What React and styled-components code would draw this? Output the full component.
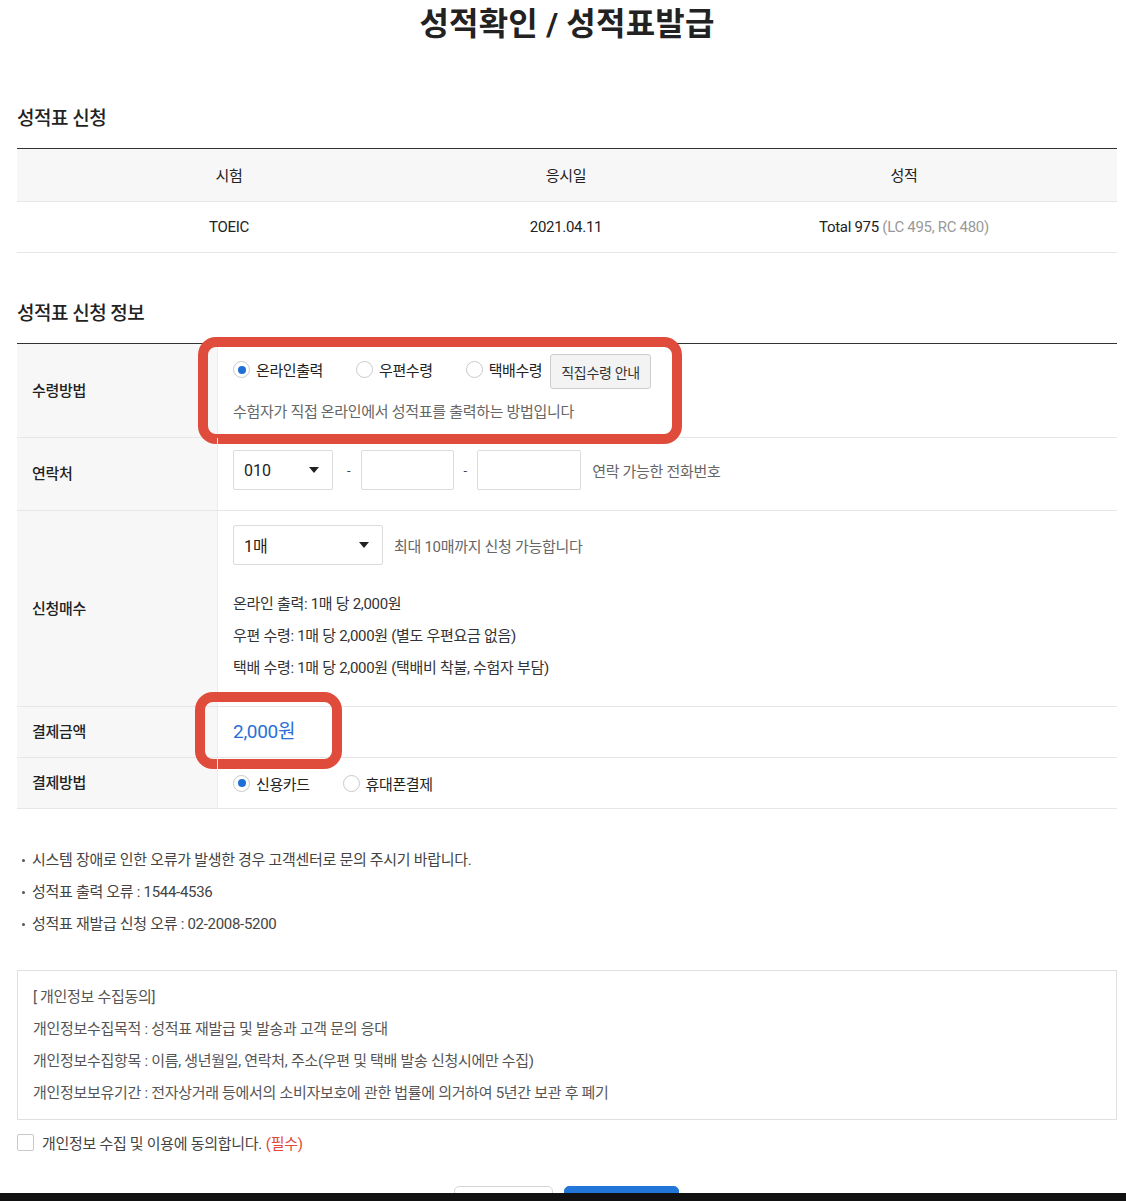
import React from 'react';
import styled, { createGlobalStyle } from 'styled-components';

const GlobalStyle = createGlobalStyle`
  html, body {
    margin: 0;
    padding: 0;
    background: #fff;
  }
  body {
    font-family: Roboto, "Noto Sans CJK KR", sans-serif;
    color: #222;
  }
  * {
    box-sizing: border-box;
  }
`;

const Page = styled.div`
  padding: 0 9px 60px 17px;
  width: 1126px;
`;

const Title = styled.h1`
  margin: 0;
  padding-top: 2px;
  text-align: center;
  font-size: 32px;
  line-height: 44px;
  font-weight: 700;
  letter-spacing: 0.2px;
  color: #222;
`;

const SectionTitle = styled.h2`
  margin: ${props => (props.first ? '59px' : '47px')} 0 15px 0;
  font-size: 19px;
  line-height: 28px;
  font-weight: 500;
  letter-spacing: -0.5px;
`;

const ScoreTable = styled.div`
  border-top: 1px solid #333;
`;

const ScoreRow = styled.div`
  display: grid;
  grid-template-columns: 424px 250px 1fr;
  height: ${props => (props.head ? '53px' : '51px')};
  align-items: center;
  background: ${props => (props.head ? '#f7f7f7' : '#fff')};
  border-bottom: 1px solid #e6e6e6;
  font-size: 15px;
  padding-bottom: ${props => (props.head ? '2px' : '0')};
  text-align: center;
  letter-spacing: -0.3px;
`;

const Muted = styled.span`
  color: #999;
`;

const FormTable = styled.div`
  border-top: 1px solid #333;
`;

const FormRow = styled.div`
  display: flex;
  border-bottom: 1px solid #e6e6e6;
  min-height: ${props => props.h}px;
`;

const Label = styled.div`
  width: 200px;
  flex-shrink: 0;
  background: #f7f7f7;
  display: flex;
  align-items: center;
  padding: 0 0 3px 15px;
  font-size: 15px;
  font-weight: 500;
  letter-spacing: -0.3px;
  color: #222;
`;

const Value = styled.div`
  position: relative;
  flex: 1;
  border-left: 1px solid #ececec;
  padding: ${props => props.pad || '0 15px'};
  display: flex;
  flex-direction: column;
  justify-content: ${props => (props.center ? 'center' : 'flex-start')};
`;

const Line = styled.div`
  display: flex;
  align-items: center;
  min-height: ${props => props.h || 20}px;
  margin-top: ${props => props.mt || 0}px;
`;

const RadioItem = styled.label`
  display: flex;
  align-items: center;
  margin-right: 33px;
  margin-bottom: ${props => (props.lift ? '4px' : '0')};
  font-size: 15px;
  letter-spacing: -0.4px;
  color: #222;
`;

const RadioCircle = styled.span`
  width: 17px;
  height: 17px;
  border-radius: 50%;
  border: 1px solid #c9c9c9;
  background: #fff;
  margin-right: 6px;
  display: flex;
  align-items: center;
  justify-content: center;

  &::after {
    content: '';
    width: 8px;
    height: 8px;
    border-radius: 50%;
    background: ${props => (props.checked ? '#1f6fd6' : 'transparent')};
  }
`;

const GuideButton = styled.button`
  margin-left: -25px;
  height: 35px;
  padding: 0 10px;
  border: 1px solid #cdcdcd;
  border-radius: 3px;
  background: #f3f3f3;
  font-family: inherit;
  font-size: 14px;
  letter-spacing: -0.3px;
  color: #333;
`;

const Help = styled.span`
  font-size: 15px;
  color: #666;
  letter-spacing: -0.3px;
`;

const SelectBox = styled.div`
  width: ${props => props.w}px;
  height: 40px;
  margin-right: ${props => props.mr || 0}px;
  border: 1px solid #dcdcdc;
  border-radius: 2px;
  display: flex;
  align-items: center;
  justify-content: space-between;
  padding: 0 13px 0 10px;
  font-size: 16px;
  color: #222;

  &::after {
    content: '';
    border-left: 5px solid transparent;
    border-right: 5px solid transparent;
    border-top: 6px solid #222;
  }
`;

const Dash = styled.span`
  margin: 0 10px;
  font-size: 13px;
  color: #444;
`;

const TextBox = styled.div`
  width: ${props => props.w}px;
  height: 40px;
  border: 1px solid #dcdcdc;
  border-radius: 2px;
`;

const SideNote = styled(Help)`
  margin-left: ${props => props.ml || 11}px;
`;

const PriceList = styled.div`
  margin-top: 23px;
`;

const PriceLine = styled.div`
  font-size: 15px;
  line-height: 32px;
  color: #333;
  letter-spacing: -0.3px;
`;

const Amount = styled.span`
  font-size: 19px;
  color: #2a6fd6;
  letter-spacing: -0.3px;
`;

const Highlight = styled.div`
  position: absolute;
  left: ${props => props.x}px;
  top: ${props => props.y}px;
  width: ${props => props.w}px;
  height: ${props => props.h}px;
  border: 10px solid #df4c3b;
  border-radius: 18px;
  pointer-events: none;
`;

const Notes = styled.ul`
  list-style: none;
  margin: 35px 0 0 0;
  padding: 0;
`;

const Note = styled.li`
  display: flex;
  align-items: center;
  line-height: 32px;
  font-size: 15px;
  color: #444;
  letter-spacing: -0.3px;

  &::before {
    content: '';
    width: 3px;
    height: 3px;
    border-radius: 50%;
    background: #555;
    margin: 0 7px 0 5px;
  }
`;

const PrivacyBox = styled.div`
  margin-top: 30px;
  border: 1px solid #e0e0e0;
  padding: 10px 15px 10px;
  font-size: 15px;
  line-height: 32px;
  color: #555;
  letter-spacing: -0.3px;
`;

const AgreeRow = styled.label`
  display: flex;
  align-items: center;
  margin-top: 12px;
  font-size: 15px;
  color: #444;
  letter-spacing: -0.3px;
`;

const CheckBox = styled.span`
  width: 17px;
  height: 17px;
  border: 1px solid #c9c9c9;
  border-radius: 2px;
  margin-right: 8px;
`;

const Required = styled.span`
  color: #e0483a;
  margin-left: 4px;
`;

const Buttons = styled.div`
  display: flex;
  justify-content: center;
  gap: 11px;
  margin-top: 33px;
  padding-right: 1px;
`;

const ActionButton = styled.button`
  width: ${props => props.w}px;
  height: 50px;
  border-radius: 5px;
  border: 1px solid ${props => (props.primary ? '#2276d8' : '#d6d6d6')};
  background: ${props => (props.primary ? '#2276d8' : '#fff')};
`;

const BottomBar = styled.div`
  position: fixed;
  left: 0;
  right: 0;
  bottom: 0;
  height: 8px;
  background: #111;
`;

const Radio = ({ checked, lift, children }) => (
  <RadioItem lift={lift}>
    <RadioCircle checked={checked} />
    {children}
  </RadioItem>
);

const App = () => (
  <Page>
    <GlobalStyle />
    <Title>성적확인 / 성적표발급</Title>

    <SectionTitle first>성적표 신청</SectionTitle>
    <ScoreTable>
      <ScoreRow head>
        <div>시험</div>
        <div>응시일</div>
        <div>성적</div>
      </ScoreRow>
      <ScoreRow>
        <div>TOEIC</div>
        <div>2021.04.11</div>
        <div>Total 975 <Muted>(LC 495, RC 480)</Muted></div>
      </ScoreRow>
    </ScoreTable>

    <SectionTitle>성적표 신청 정보</SectionTitle>
    <FormTable>
      <FormRow h={94}>
        <Label>수령방법</Label>
        <Value pad="10px 15px 16px">
          <Line h={35}>
            <Radio checked lift>온라인출력</Radio>
            <Radio lift>우편수령</Radio>
            <Radio lift>택배수령</Radio>
            <GuideButton>직집수령 안내</GuideButton>
          </Line>
          <Line mt={11}>
            <Help>수험자가 직접 온라인에서 성적표를 출력하는 방법입니다</Help>
          </Line>
          <Highlight x={-20} y={-7} w={484} h={107} />
        </Value>
      </FormRow>

      <FormRow h={73}>
        <Label>연락처</Label>
        <Value pad="12px 15px 20px">
          <Line>
            <SelectBox w={100} mr={4}>010</SelectBox>
            <Dash>-</Dash>
            <TextBox w={93} />
            <Dash>-</Dash>
            <TextBox w={104} />
            <SideNote>연락 가능한 전화번호</SideNote>
          </Line>
        </Value>
      </FormRow>

      <FormRow h={196}>
        <Label>신청매수</Label>
        <Value pad="14px 15px 22px">
          <Line>
            <SelectBox w={150}>1매</SelectBox>
            <SideNote>최대 10매까지 신청 가능합니다</SideNote>
          </Line>
          <PriceList>
            <PriceLine>온라인 출력: 1매 당 2,000원</PriceLine>
            <PriceLine>우편 수령: 1매 당 2,000원 (별도 우편요금 없음)</PriceLine>
            <PriceLine>택배 수령: 1매 당 2,000원 (택배비 착불, 수험자 부담)</PriceLine>
          </PriceList>
        </Value>
      </FormRow>

      <FormRow h={51}>
        <Label>결제금액</Label>
        <Value center pad="0 15px 5px">
          <Amount>2,000원</Amount>
          <Highlight x={-23} y={-15} w={147} h={77} />
        </Value>
      </FormRow>

      <FormRow h={51}>
        <Label>결제방법</Label>
        <Value center>
          <Line>
            <Radio checked>신용카드</Radio>
            <Radio>휴대폰결제</Radio>
          </Line>
        </Value>
      </FormRow>
    </FormTable>

    <Notes>
      <Note>시스템 장애로 인한 오류가 발생한 경우 고객센터로 문의 주시기 바랍니다.</Note>
      <Note>성적표 출력 오류 : 1544-4536</Note>
      <Note>성적표 재발급 신청 오류 : 02-2008-5200</Note>
    </Notes>

    <PrivacyBox>
      <div>[ 개인정보 수집동의]</div>
      <div>개인정보수집목적 : 성적표 재발급 및 발송과 고객 문의 응대</div>
      <div>개인정보수집항목 : 이름, 생년월일, 연락처, 주소(우편 및 택배 발송 신청시에만 수집)</div>
      <div>개인정보보유기간 : 전자상거래 등에서의 소비자보호에 관한 법률에 의거하여 5년간 보관 후 폐기</div>
    </PrivacyBox>

    <AgreeRow>
      <CheckBox />
      개인정보 수집 및 이용에 동의합니다.
      <Required>(필수)</Required>
    </AgreeRow>

    <Buttons>
      <ActionButton w={99} />
      <ActionButton w={115} primary />
    </Buttons>

    <BottomBar />
  </Page>
);

export default App;
